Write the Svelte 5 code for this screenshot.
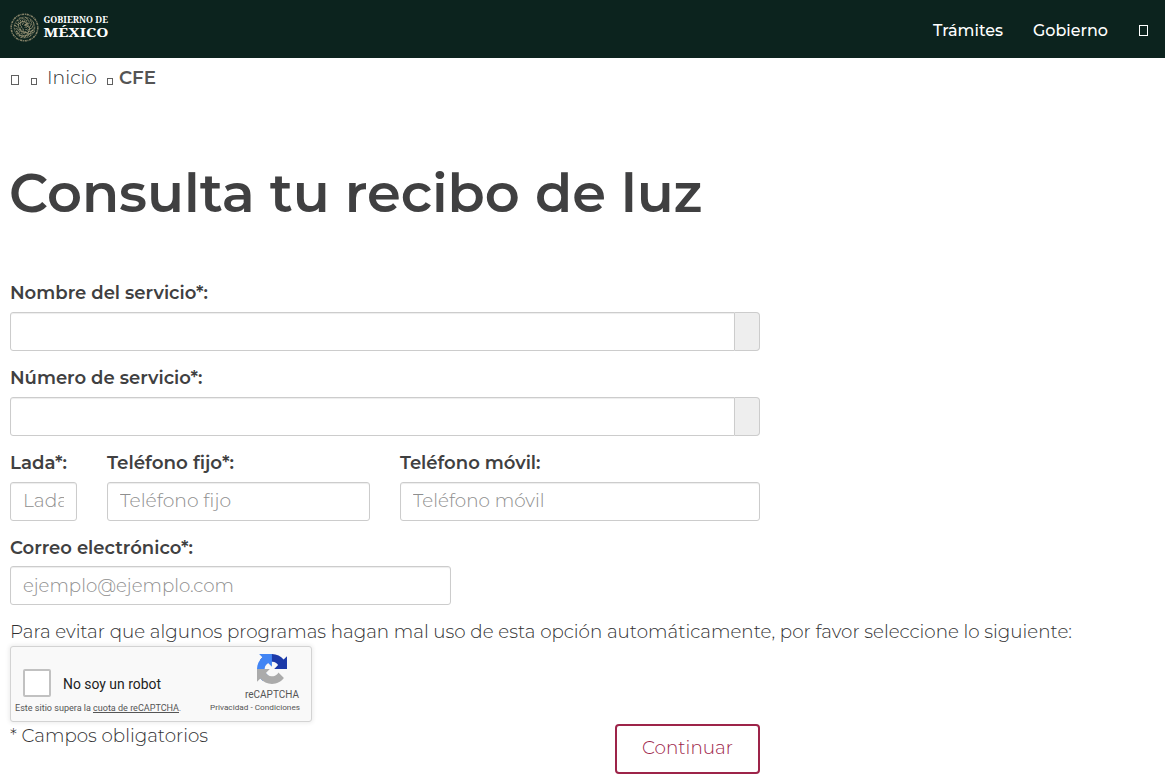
<script>
  const specks = Array.from({ length: 64 }, (_, i) => {
    const a = i * 2.4;
    const r = 1.2 + Math.sqrt(i) * 1.12;
    return {
      x: 14.5 + Math.cos(a) * r,
      y: 14.5 + Math.sin(a) * r,
      turn: (i * 67) % 180
    };
  });
</script>

{#snippet line(text, width, kind = 'body')}
  <svg class="line {kind}" {width} height="24" role="img" aria-label={text}>
    <text x="0" y="17" textLength={width} lengthAdjust="spacingAndGlyphs">{text}</text>
  </svg>
{/snippet}

{#snippet captcha(text, width, size, kind = '')}
  <svg class="small {kind}" {width} height={size + 4}>
    <text x="0" y={size} font-size={size} textLength={width} lengthAdjust="spacingAndGlyphs">{text}</text>
  </svg>
{/snippet}

<header>
  <div class="brand">
    <svg width="29" height="29" viewBox="0 0 29 29">
      <circle cx="14.5" cy="14.5" r="13.3" fill="none" stroke="#858268" stroke-width="1.6" stroke-dasharray="2.2 .8 1 .6" />
      <circle cx="14.5" cy="14.5" r="10.5" fill="none" stroke="#656a55" stroke-width=".7" />
      {#each specks as s}
        <path d="M-1.1 0Q0-1.1 1.1.2" transform="translate({s.x} {s.y}) rotate({s.turn})" fill="none" stroke="#9a9476" stroke-width=".8" />
      {/each}
      <path d="M8 12q4-5 7-3l3 2-3 1 5 3-2 5-5-1-4-3M6 18q4 6 9 5t8-6" fill="none" stroke="#aaa180" stroke-width=".8" />
    </svg>
    <svg class="wordmark" width="66" height="29">
      <text x="0.5" y="10.3" font-size="8.4" textLength="64.5" lengthAdjust="spacingAndGlyphs">GOBIERNO DE</text>
      <text x="0.5" y="24" font-size="12.8" textLength="65" lengthAdjust="spacingAndGlyphs">MÉXICO</text>
    </svg>
  </div>
  <nav>
    {@render line('Trámites', 70, 'nav')}
    {@render line('Gobierno', 75, 'nav')}
    <i class="glyph search"></i>
  </nav>
</header>

<main>
  <div class="crumbs">
    <i class="glyph home"></i>
    <i class="glyph sep"></i>
    {@render line('Inicio', 50)}
    <i class="glyph sep last"></i>
    {@render line('CFE', 37, 'strong grey')}
  </div>

  <h1>
    <svg class="line" width="696" height="64">
      <text x="-1" y="49" textLength="693.5" lengthAdjust="spacingAndGlyphs">Consulta tu recibo de luz</text>
    </svg>
  </h1>

  <form>
    <div class="field">
      {@render line('Nombre del servicio*:', 198, 'strong')}
      <div class="group"><div class="box"></div><span class="addon"></span></div>
    </div>
    <div class="field">
      {@render line('Número de servicio*:', 192.5, 'strong')}
      <div class="group"><div class="box"></div><span class="addon"></span></div>
    </div>
    <div class="phones">
      <div class="field">
        {@render line('Lada*:', 57, 'strong')}
        <div class="box"><span class="clip">{@render line('Lada', 45, 'hint')}</span></div>
      </div>
      <div class="field">
        {@render line('Teléfono fijo*:', 127, 'strong')}
        <div class="box"><span class="clip">{@render line('Teléfono fijo', 111, 'hint')}</span></div>
      </div>
      <div class="field">
        {@render line('Teléfono móvil:', 140.5, 'strong')}
        <div class="box"><span class="clip">{@render line('Teléfono móvil', 131.5, 'hint')}</span></div>
      </div>
    </div>
    <div class="field mail">
      {@render line('Correo electrónico*:', 183, 'strong')}
      <div class="box"><span class="clip">{@render line('ejemplo@ejemplo.com', 211, 'hint')}</span></div>
    </div>
    <div class="notice">
      {@render line('Para evitar que algunos programas hagan mal uso de esta opción automáticamente, por favor seleccione lo siguiente:', 1062)}
    </div>

    <div class="recaptcha">
      <div class="left">
        <div class="check"><span></span>{@render captcha('No soy un robot', 98, 14, 'dark')}</div>
        <div class="quota">
          {@render captcha('Este sitio supera la', 76, 8.5)}
          <span class="link">{@render captcha('cuota de reCAPTCHA', 86, 8.5)}</span>
          {@render captcha('.', 2, 8.5)}
        </div>
      </div>
      <div class="right">
        <svg class="logo" width="30" height="30" viewBox="0 0 64 64">
          <path fill="#1c3aa9" d="M64 31.955l-.033-1.37V4.687l-7.16 7.16C50.948 4.674 42.033.093 32.05.093c-10.4 0-19.622 4.96-25.458 12.64l11.736 11.86a15.55 15.55 0 0 1 4.754-5.334c2.05-1.6 4.952-2.906 8.968-2.906.485 0 .86.057 1.135.163 4.976.393 9.288 3.14 11.828 7.124l-8.307 8.307L64 31.953" />
          <path fill="#4285f4" d="M31.862.094l-1.37.033H4.594l7.16 7.16C4.58 13.147 0 22.06 0 32.046c0 10.4 4.96 19.622 12.64 25.458L24.5 45.768a15.55 15.55 0 0 1-5.334-4.754c-1.6-2.05-2.906-4.952-2.906-8.968 0-.485.057-.86.163-1.135.393-4.976 3.14-9.288 7.124-11.828l8.307 8.307L31.86.095" />
          <path fill="#ababab" d="M.001 32.045l.033 1.37v25.898l7.16-7.16c5.86 7.173 14.774 11.754 24.76 11.754 10.4 0 19.622-4.96 25.458-12.64l-11.736-11.86a15.55 15.55 0 0 1-4.754 5.334c-2.05 1.6-4.952 2.906-8.968 2.906-.485 0-.86-.057-1.135-.163-4.976-.393-9.288-3.14-11.828-7.124l8.307-8.307c-10.522.04-22.4.066-27.295-.005" />
        </svg>
        {@render captcha('reCAPTCHA', 54, 10)}
        <div class="terms">{@render captcha('Privacidad - Condiciones', 90, 8)}</div>
      </div>
    </div>

    <div class="actions">
      <div class="required">{@render line('* Campos obligatorios', 198)}</div>
      <button type="button">{@render line('Continuar', 91, 'wine')}</button>
    </div>
  </form>
</main>

<style>
  :global(body) { margin: 0; background: #fff; overflow: hidden; }
  * { box-sizing: border-box; }
  svg { display: block; flex: none; overflow: visible; }
  .line { font-family: Montserrat, Inter, sans-serif; font-size: 18px; font-weight: 300; fill: #404041; }
  .body { fill: #303031; }
  .strong { font-weight: 600; margin-left: -.5px; }
  .grey { fill: #545454; }
  .hint { fill: #8e8e8e; }
  .wine { fill: #9d2449; }
  .nav { font-size: 16px; font-weight: 500; fill: #fff; }

  header { height: 58px; background: #0c231e; display: flex; justify-content: space-between; padding: 13px 17px 0 10px; }
  .brand { display: flex; gap: 4px; }
  .wordmark { font-family: "Noto Serif", "DejaVu Serif", serif; font-weight: 700; fill: #fff; }
  nav { display: flex; gap: 29.5px; padding-top: 6px; }
  .glyph { display: block; flex: none; border: 1px solid #606060; }
  .search { width: 9px; height: 11px; margin: 6px 0 0 2px; border-color: #fff; }
  .home { width: 8px; height: 10px; margin: 2px 12px 0 1px; }
  .sep { width: 6px; height: 7px; margin: 5px 10px 0 0; }
  .last { margin: 5px 6.5px 0 10px; }

  main { padding: 9px 10px 0; }
  .crumbs { display: flex; align-items: center; height: 24px; }
  h1 { margin: 72px 0 0; height: 64px; }
  h1 .line { font-size: 54px; font-weight: 600; }
  form { padding-top: 55px; }
  .field { height: 85px; }
  .field .box { height: 39px; border: 1px solid #ccc; border-radius: 3px; box-shadow: inset 0 1px 1px rgba(0, 0, 0, .075); padding: 7px 12px 0; }
  .field > .box, .group { margin-top: 6px; }
  .group { display: flex; width: 750px; }
  .group .box { flex: 1; border-radius: 3px 0 0 3px; }
  .addon { width: 25px; border: 1px solid #ccc; border-left: 0; border-radius: 0 4px 4px 0; background: #eee; }
  .clip { display: block; overflow: hidden; height: 24px; margin-left: -.5px; }
  .phones { display: grid; grid-template-columns: 67px 263px 360px; gap: 30px; }
  .mail { width: 441px; height: 84px; }
  .mail .box { margin-top: 5px; padding-top: 8px; }
  .notice { height: 25px; }

  .small { font-family: Roboto, sans-serif; font-weight: 400; fill: #555; }
  .dark { fill: #222; }
  .recaptcha { width: 302px; height: 76px; display: flex; justify-content: space-between; border: 1px solid #d3d3d3; border-radius: 3px; background: #f9f9f9; box-shadow: 0 0 4px 1px rgba(0, 0, 0, .08); }
  .left { padding: 22px 0 0 4px; }
  .check { display: flex; align-items: center; gap: 12px; padding-left: 8px; }
  .check span { width: 28px; height: 28px; border: 2px solid #c1c1c1; border-radius: 2px; background: #fff; }
  .check svg { margin-top: 2px; }
  .quota { display: flex; gap: 2px; padding-top: 5px; }
  .quota > :last-child { margin-left: -2px; }
  .link { height: 11px; border-bottom: 1px solid #555; }
  .right { padding: 7px 11px 0 0; display: flex; flex-direction: column; align-items: flex-end; }
  .logo { margin: 0 13px 4px 0; }
  .right > .small { margin-right: 1px; }
  .actions { display: flex; justify-content: space-between; width: 750px; }
  .required { padding-top: 3px; }
  button { width: 145px; height: 50px; margin: 2px 0 0; padding: 11px 0 0 25px; border: 2px solid #9d2449; border-radius: 4px; background: #fff; display: flex; align-items: flex-start; }
</style>
